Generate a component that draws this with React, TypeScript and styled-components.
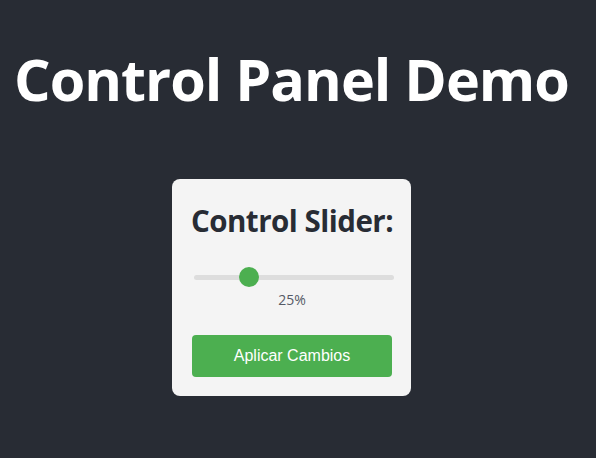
import React, { useState } from "react";
import styled, { createGlobalStyle } from "styled-components";

const Global = createGlobalStyle`
  html, body { margin: 0; padding: 0; background: #282c34; }
  body { font-family: "Open Sans", "Noto Sans", sans-serif; }
`;

const Page = styled.div`
  min-height: 458px;
  box-sizing: border-box;
  padding: 0 13px 0 0;
  display: flex;
  flex-direction: column;
  align-items: center;
  background: #282c34;
`;

const Title = styled.h1`
  margin: 39px 0 0;
  color: #ffffff;
  font-family: "Open Sans", sans-serif;
  font-weight: 700;
  font-size: 57.5px;
  line-height: 80px;
  letter-spacing: -1px;
  white-space: nowrap;
`;

const Card = styled.div`
  margin-top: 60px;
  width: 239px;
  box-sizing: border-box;
  padding: 22px 19px 19px 20px;
  background: #f4f4f4;
  border-radius: 8px;
  display: flex;
  flex-direction: column;
  align-items: center;
`;

const CardTitle = styled.h2`
  margin: 0;
  color: #282c34;
  font-family: "Open Sans", sans-serif;
  font-weight: 700;
  font-size: 29.5px;
  line-height: 40px;
  letter-spacing: -0.5px;
  white-space: nowrap;
`;

const SliderWrap = styled.div`
  margin: 26px 0 0 4px;
  width: 200px;
  height: 20px;
  position: relative;
  display: flex;
  align-items: center;
`;

const Track = styled.div`
  width: 100%;
  height: 5px;
  border-radius: 3px;
  background: #dddddd;
`;

const Thumb = styled.div`
  position: absolute;
  top: 0;
  width: 20px;
  height: 20px;
  border-radius: 50%;
  background: #4caf50;
`;

const Value = styled.div`
  margin-top: 4px;
  color: #555a66;
  font-family: "Open Sans", sans-serif;
  font-size: 14px;
  line-height: 18px;
`;

const Button = styled.button`
  margin-top: 26px;
  width: 200px;
  height: 42px;
  border: none;
  border-radius: 4px;
  background: #4caf50;
  color: #fff;
  font-family: "Liberation Sans", Arial, sans-serif;
  font-size: 16px;
  cursor: pointer;
`;

export default function App() {
  const [value] = useState(25);
  return (
    <Page>
      <Global />
      <Title>Control Panel Demo</Title>
      <Card>
        <CardTitle>Control Slider:</CardTitle>
        <SliderWrap>
          <Track />
          <Thumb style={{ left: `${(value / 100) * 180}px` }} />
        </SliderWrap>
        <Value>{value}%</Value>
        <Button>Aplicar Cambios</Button>
      </Card>
    </Page>
  );
}
